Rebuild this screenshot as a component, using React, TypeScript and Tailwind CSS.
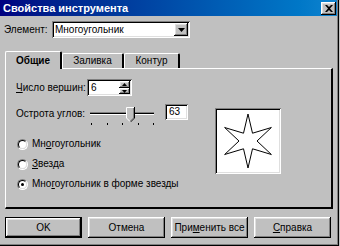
import React from "react";

const raised =
  "shadow-[inset_-1px_-1px_0_#000,inset_1px_1px_0_#fff,inset_-2px_-2px_0_#808080,inset_2px_2px_0_#dfdfdf]";
const sunken =
  "shadow-[inset_1px_1px_0_#808080,inset_-1px_-1px_0_#fff,inset_2px_2px_0_#000,inset_-2px_-2px_0_#dfdfdf]";

function Btn({ children, def }: { children: React.ReactNode; def?: boolean }) {
  return (
    <div className={`w-[77px] h-[21px] shrink-0 ${def ? "border border-black" : ""}`}>
      <div className={`w-full h-full flex items-center justify-center whitespace-nowrap bg-[#c0c0c0] ${raised}`}>
        {children}
      </div>
    </div>
  );
}

function Radio({ checked, children }: { checked?: boolean; children: React.ReactNode }) {
  return (
    <div className="h-[20px] flex items-center">
      <div className="ml-[1px] shrink-0 w-[11px] h-[11px] rounded-full border border-t-[#808080] border-l-[#808080] border-b-white border-r-white">
        <div className="w-full h-full rounded-full border border-t-black border-l-black border-b-[#dfdfdf] border-r-[#dfdfdf] bg-white flex items-center justify-center">
          {checked && <div className="w-[3px] h-[3px] rounded-full bg-black" />}
        </div>
      </div>
      <span className="ml-[4px] whitespace-nowrap">{children}</span>
    </div>
  );
}

function Arrow({ up }: { up?: boolean }) {
  return (
    <svg width="5" height="3" viewBox="0 0 5 3">
      {up ? (
        <polygon points="2.5,0 5,3 0,3" fill="#000" />
      ) : (
        <polygon points="0,0 5,0 2.5,3" fill="#000" />
      )}
    </svg>
  );
}

function Star() {
  const cx = 33,
    cy = 33,
    R = 27,
    r = 9;
  const pts: string[] = [];
  for (let i = 0; i < 12; i++) {
    const a = (-90 + i * 30) * (Math.PI / 180);
    const rad = i % 2 === 0 ? R : r;
    pts.push(`${(cx + rad * Math.cos(a)).toFixed(2)},${(cy + rad * Math.sin(a)).toFixed(2)}`);
  }
  return (
    <svg width="62" height="62" viewBox="2 2 62 62">
      <polygon points={pts.join(" ")} fill="white" stroke="#000" strokeWidth="1" />
    </svg>
  );
}

export default function App() {
  return (
    <div className="w-[340px] h-[246px] bg-[#c0c0c0] font-['Liberation_Sans',Arial,sans-serif] text-[10px] text-black leading-none overflow-hidden">
      <div className="w-[339px] h-[246px] flex flex-col pr-[2px] pb-[2px] shadow-[inset_-1px_-1px_0_#000,inset_-2px_-2px_0_#808080]">
        {/* Title bar */}
        <div className="h-[16px] flex items-center bg-linear-to-r from-[#000080] to-[#1084d0] pl-[3px] pr-[1px]">
          <span className="text-white font-bold text-[11px] whitespace-nowrap">Свойства инструмента</span>
          <div className={`ml-auto w-[15px] h-[13px] bg-[#c0c0c0] flex items-center justify-center ${raised}`}>
            <svg width="8" height="7" viewBox="0 0 8 7">
              <path d="M0 0h2l2 2 2-2h2L5 3.5 8 7H6L4 5 2 7H0l3-3.5z" fill="#000" />
            </svg>
          </div>
        </div>

        {/* Element row */}
        <div className="flex items-center mt-[5px] h-[17px] pl-[4px]">
          <span className="w-[48px] shrink-0 whitespace-nowrap">Элемент:</span>
          <div className={`w-[138px] h-[17px] bg-white flex items-center pl-[3px] pr-[2px] ${sunken}`}>
            <span className="whitespace-nowrap">Многоугольник</span>
            <div className={`ml-auto w-[14px] h-[13px] bg-[#c0c0c0] flex items-center justify-center ${raised}`}>
              <svg width="7" height="4" viewBox="0 0 7 4">
                <polygon points="0,0 7,0 3.5,4" fill="#000" />
              </svg>
            </div>
          </div>
        </div>

        {/* Tabs */}
        <div className="mt-[12px] h-[18px] flex items-end pl-[5px] relative z-10">
          <div className="w-[57px] h-[18px] -mb-[1px] bg-[#c0c0c0] border-t border-l border-white border-r-2 border-r-[#000] rounded-t-[2px] flex items-center justify-center font-bold whitespace-nowrap">
            Общие
          </div>
          <div className="w-[62px] h-[15px] border-t border-l border-white border-r-2 border-r-[#000] rounded-t-[2px] flex items-center justify-center whitespace-nowrap">
            Заливка
          </div>
          <div className="w-[56px] h-[15px] border-t border-l border-white border-r-2 border-r-[#000] rounded-t-[2px] flex items-center justify-center whitespace-nowrap">
            Контур
          </div>
        </div>

        {/* Panel */}
        <div className="ml-[5px] w-[328px] h-[141px] border-t border-l border-white border-r-2 border-b-2 border-r-[#000] border-b-[#000] flex pl-[10px] pt-[10px]">
          <div className="w-[185px] shrink-0 flex flex-col">
            {/* Row 1 */}
            <div className="h-[17px] flex items-center">
              <span className="w-[71px] shrink-0 whitespace-nowrap">
                <span className="underline">Ч</span>исло вершин:
              </span>
              <div className={`w-[45px] h-[17px] shrink-0 bg-white flex items-center pl-[4px] pr-[2px] ${sunken}`}>
                <span>6</span>
                <div className="ml-auto flex flex-col">
                  <div className={`w-[11px] h-[7px] bg-[#c0c0c0] flex items-center justify-center ${raised}`}>
                    <Arrow up />
                  </div>
                  <div className={`w-[11px] h-[6px] bg-[#c0c0c0] flex items-center justify-center ${raised}`}>
                    <Arrow />
                  </div>
                </div>
              </div>
            </div>

            {/* Row 2 */}
            <div className="mt-[8px] h-[22px] flex items-start">
              <span className="w-[74px] shrink-0 mt-[5px] whitespace-nowrap">Острота углов:</span>
              <div className="relative w-[64px] h-[22px] shrink-0">
                <div className="absolute left-0 right-0 top-[8px] h-[3px] bg-black border-t border-t-[#808080] border-b border-b-white" />
                <svg className="absolute left-[36px] top-[3px]" width="9" height="15" viewBox="0 0 9 15">
                  <polygon points="0,0 8,0 8,11 4,15 0,11" fill="#c0c0c0" />
                  <polyline points="0.5,11 0.5,0.5 8,0.5" fill="none" stroke="#fff" strokeWidth="1" />
                  <polyline points="8.5,0 8.5,11 4.5,15" fill="none" stroke="#000" strokeWidth="1" />
                  <polyline points="7.5,1 7.5,11 4,14.3" fill="none" stroke="#808080" strokeWidth="1" />
                  <line x1="0.5" y1="11" x2="4" y2="14.5" stroke="#fff" strokeWidth="1" />
                </svg>
                <div className="absolute left-[1px] right-0 top-[19px] flex justify-between">
                  <div className="w-[1px] h-[2px] bg-black" />
                  <div className="w-[1px] h-[2px] bg-black" />
                  <div className="w-[1px] h-[2px] bg-black" />
                  <div className="w-[1px] h-[2px] bg-black" />
                  <div className="w-[1px] h-[2px] bg-black" />
                </div>
              </div>
              <div className={`ml-[11px] w-[23px] h-[16px] shrink-0 bg-white flex items-center pl-[4px] ${sunken}`}>
                63
              </div>
            </div>

            {/* Radios */}
            <div className="mt-[8px] flex flex-col">
              <Radio>
                Мн<span className="underline">о</span>гоугольник
              </Radio>
              <Radio>
                <span className="underline">З</span>везда
              </Radio>
              <Radio checked>
                Мно<span className="underline">г</span>оугольник в форме звезды
              </Radio>
            </div>
          </div>

          {/* Preview */}
          <div className={`ml-[14px] mt-[29px] w-[66px] h-[66px] shrink-0 bg-white flex items-center justify-center ${sunken}`}>
            <Star />
          </div>
        </div>

        {/* Buttons */}
        <div className="mt-[8px] pl-[5px] flex gap-[6px]">
          <Btn def>OK</Btn>
          <Btn>Отмена</Btn>
          <Btn>
            При<span className="underline">м</span>енить все
          </Btn>
          <Btn>
            <span className="underline">С</span>правка
          </Btn>
        </div>
      </div>
    </div>
  );
}
